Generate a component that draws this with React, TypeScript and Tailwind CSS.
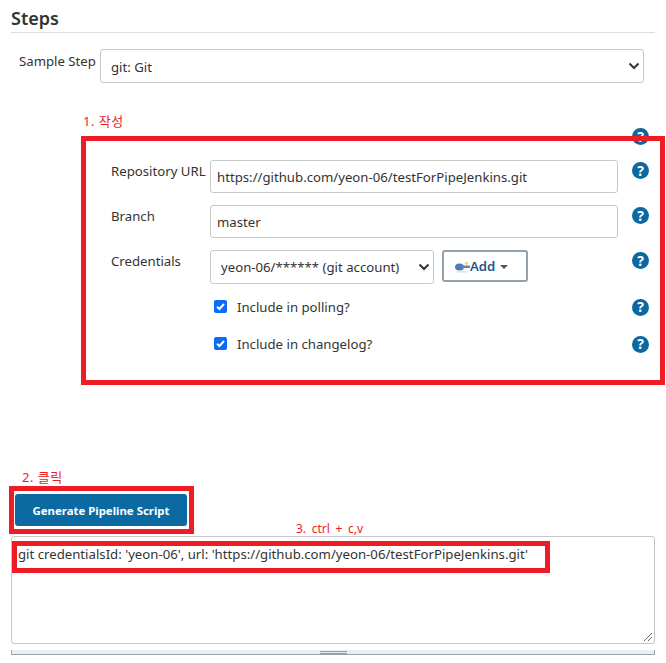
import React from "react";

const font = { fontFamily: '"Noto Sans", "Noto Sans CJK KR", sans-serif' };

function Help({ className = "" }: { className?: string }) {
    return (
        <span className={"flex h-[17px] w-[17px] shrink-0 items-center justify-center rounded-full bg-[#0b68a0] text-[14px] leading-none font-bold text-white " + className}>
            ?
        </span>
    );
}

function Row({ label, children }: { label: string; children: React.ReactNode }) {
    return (
        <div className="flex items-start">
            <div className="w-[99px] pt-[1px] text-[13.2px] leading-[20px] whitespace-nowrap text-[#333]">{label}</div>
            <div className="w-[408px]">{children}</div>
            <Help className="mt-[2px] ml-[14px]" />
        </div>
    );
}

function Chevron() {
    return (
        <svg width="14" height="10" viewBox="0 0 14 10" className="absolute top-1/2 right-[2px] -translate-y-1/2" fill="none">
            <path d="M2.5 2.5 7 7l4.5-4.5" stroke="#333" strokeWidth="2" />
        </svg>
    );
}

function Check({ label }: { label: string }) {
    return (
        <div className="flex h-[20px] items-center pl-[103px]">
            <span className="-mt-[1px] flex h-[13px] w-[13px] items-center justify-center rounded-[2px] bg-[#0b6cf5]">
                <svg width="11" height="11" viewBox="0 0 11 11" fill="none">
                    <path d="M2 5.8 4.4 8 9 3" stroke="#fff" strokeWidth="2" />
                </svg>
            </span>
            <span className="ml-[10px] pt-[2px] text-[13.2px] text-[#333]">{label}</span>
            <Help className="mr-[17px] ml-auto" />
        </div>
    );
}

export default function App() {
    return (
        <main className="relative h-[663px] w-[666px] overflow-hidden bg-white" style={font}>
            <div className="px-[11px]">
                <h2 className="h-[33px] border-b border-[#ddd] pt-[5px] text-[18px] leading-[26px] font-semibold text-[#333]">Steps</h2>

                <div className="mt-[16px] flex items-start pl-[8px]">
                    <label className="w-[81px] pt-[2px] text-[13.2px] leading-[20px] whitespace-nowrap text-[#333]">Sample Step</label>
                    <div className="relative flex h-[34px] w-[544px] items-center rounded-[3px] border border-[#c8c8c8] pt-[3px] pl-[10px] text-[13.2px] text-[#333]">
                        git: Git
                        <Chevron />
                    </div>
                </div>

                <div className="mt-[29px] pl-[72px] text-[13px] leading-[18px] tracking-[0.5px] text-[#ee1c25]">1. 작성</div>
            </div>

            <div className="flex justify-end pr-[17px]">
                <Help className="-mt-[2px]" />
            </div>

            <div className="mt-[15px] flex flex-col pl-[111px]">
                <Row label="Repository URL">
                    <div className="flex h-[33px] items-center rounded-[3px] border border-[#c8c8c8] pt-[3px] pl-[6px] text-[13.2px] text-[#333]">
                        https://github.com/yeon-06/testForPipeJenkins.git
                    </div>
                </Row>
                <div className="h-[12px]" />
                <Row label="Branch">
                    <div className="flex h-[33px] items-center rounded-[3px] border border-[#c8c8c8] pt-[3px] pl-[6px] text-[13.2px] text-[#333]">master</div>
                </Row>
                <div className="h-[12px]" />
                <Row label="Credentials">
                    <div className="flex gap-[8px]">
                        <div className="relative flex h-[34px] w-[224px] items-center rounded-[3px] border border-[#c8c8c8] pt-[2px] pl-[10px] text-[13.2px] text-[#333]">
                            yeon-06/****** (git account)
                            <Chevron />
                        </div>
                        <button className="flex h-[32px] w-[86px] items-center rounded-[3px] border-2 border-[#94a2ae] pt-[1px] pl-[11px] text-[13.2px] leading-none font-semibold text-[#24558c]">
                            <svg width="16" height="12" viewBox="0 0 16 12" className="-mr-[1px]">
                                <ellipse cx="7" cy="10.7" rx="6" ry="1" fill="#e6e6e6" />
                                <ellipse cx="4.5" cy="6" rx="4.5" ry="3.5" fill="#4f7cb3" />
                                <rect x="7" y="4.5" width="8" height="2.5" fill="#5a86bb" />
                                <circle cx="11.5" cy="2.2" r="1.8" fill="#f7e94a" />
                            </svg>
                            Add
                            <span className="ml-[5px] h-0 w-0 border-x-[4px] border-t-[4px] border-x-transparent border-t-[#555]" />
                        </button>
                    </div>
                </Row>
            </div>

            <div className="mt-[13px] pl-[111px]">
                <Check label="Include in polling?" />
                <div className="h-[17px]" />
                <Check label="Include in changelog?" />
            </div>

            <div className="mt-[114px] pl-[22px] text-[13px] leading-[18px] tracking-[0.5px] text-[#ee1c25]">2. 클릭</div>

            <div className="mt-[8px] pl-[15px]">
                <button className="h-[32px] w-[172px] rounded-[3px] bg-[#0b6aa2] pt-[1px] text-[11.4px] font-bold text-white">Generate Pipeline Script</button>
            </div>

            <div className="mt-[10px] px-[11px]">
                <div className="relative h-[108px] rounded-[3px] border border-[#c8c8c8] pt-[7px] pl-[6px] text-[13.2px] leading-[20px] text-[#333]">
                    git credentialsId: 'yeon-06', url: 'https://github.com/yeon-06/testForPipeJenkins.git'
                    <svg width="10" height="10" viewBox="0 0 10 10" className="absolute right-[1px] bottom-[1px]">
                        <path d="M1 9 9 1M5 9l4-4" stroke="#666" strokeWidth="1" />
                    </svg>
                </div>
                <div className="mt-[6px] flex h-[5px] justify-center border-x border-b border-[#9aa5ad] bg-[#e9eef1]">
                    <span className="mt-[1px] h-[3px] w-[27px] border-y border-[#999]" />
                </div>
            </div>

            {/* red annotation frames drawn over the form */}
            <div className="absolute top-[136px] left-[81px] h-[249px] w-[584px] border-[5px] border-[#ee1c25]" />
            <div className="absolute top-[486px] left-[9px] h-[48px] w-[185px] border-[5px] border-[#ee1c25]" />
            <div className="absolute top-[541px] left-[12px] h-[32px] w-[538px] border-[5px] border-[#ee1c25]" />
            <div className="absolute top-[520px] left-[296px] text-[12px] leading-[18px] [word-spacing:2.5px] text-[#ee1c25]">3. ctrl + c,v</div>
        </main>
    );
}
